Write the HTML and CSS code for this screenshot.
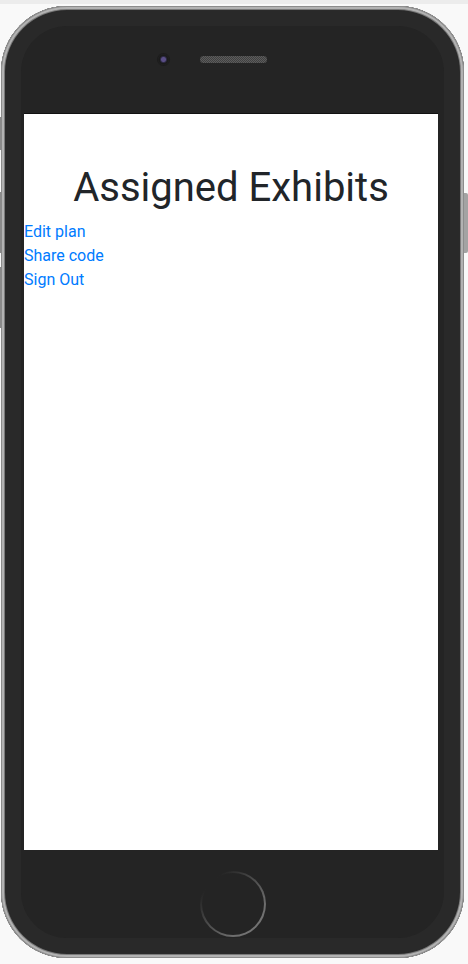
FILE: index.html
```html
<!DOCTYPE html>
<html>
<head>
<meta charset="utf-8">
<link rel="stylesheet" href="styles.css">
</head>
<body>
<div class="topbar"></div>
<div class="device">
  <div class="btn btn-mute"></div>
  <div class="btn btn-vol-up"></div>
  <div class="btn btn-vol-down"></div>
  <div class="btn btn-power"></div>
  <div class="frame">
    <div class="bezel-top">
      <div class="camera"></div>
      <div class="speaker"></div>
    </div>
    <div class="screen">
      <h1 class="title">Assigned Exhibits</h1>
      <nav class="links">
        <a href="#" class="link">Edit plan</a>
        <a href="#" class="link">Share code</a>
        <a href="#" class="link">Sign Out</a>
      </nav>
    </div>
    <div class="bezel-bottom">
      <div class="home"></div>
    </div>
  </div>
</div>
</body>
</html>
```

FILE: styles.css
```css
html, body {
  margin: 0;
  padding: 0;
}
body {
  background: #f9f9f9;
  width: 468px;
  height: 964px;
  overflow: hidden;
  font-family: Roboto, "Liberation Sans", sans-serif;
}
.topbar {
  height: 4px;
  background: #ececec;
}
.device {
  position: relative;
  margin: 2px 0 0 1px;
  width: 463px;
  height: 952px;
}
.frame {
  box-sizing: border-box;
  width: 463px;
  height: 952px;
  border-radius: 66px;
  background: #242424;
  box-shadow:
    inset 0 0 0 1px #8c8c8c,
    inset 0 0 0 3px #b2b2b2,
    inset 0 0 0 4px #7a7a7a,
    inset 0 0 0 5px #2a2a2a,
    inset 0 0 0 20px #292929;
  padding: 0 26px 0 23px;
  display: flex;
  flex-direction: column;
}
.bezel-top {
  height: 107px;
  display: flex;
  align-items: center;
  box-sizing: border-box;
  padding-left: 134px;
  gap: 31px;
}
.camera {
  width: 11px;
  height: 11px;
  border-radius: 50%;
  background: radial-gradient(circle at 50% 50%, #5a4e86 0 2px, #2f2b45 3px, #1a1a1a 4px, #202020 6px);
  box-shadow: 0 0 0 1px #1c1c1c;
}
.speaker {
  width: 67px;
  height: 7px;
  border-radius: 4px;
  background-color: #404040;
  background-image:
    linear-gradient(45deg, #5c5c5c 25%, transparent 25%, transparent 75%, #5c5c5c 75%),
    linear-gradient(45deg, #5c5c5c 25%, transparent 25%, transparent 75%, #5c5c5c 75%);
  background-size: 2px 2px;
  background-position: 0 0, 1px 1px;
}
.screen {
  width: 414px;
  height: 737px;
  background: #fff;
  box-sizing: border-box;
  padding-top: 51px;
  border-top: 1px solid #111;
}
.title {
  margin: -1px 0 8px;
  font-family: Roboto, "Liberation Sans", sans-serif;
  font-weight: 400;
  font-size: 40px;
  line-height: 1.2;
  color: #212529;
  text-align: center;
}
.links {
  display: flex;
  flex-direction: column;
  align-items: flex-start;
}
.link {
  font-size: 16px;
  line-height: 24px;
  color: #007bff;
  text-decoration: none;
}
.bezel-bottom {
  flex: 1;
  display: flex;
  justify-content: center;
  align-items: flex-start;
  padding-top: 21px;
  padding-left: 4px;
}
.home {
  width: 62px;
  height: 62px;
  border-radius: 50%;
  border: 2px solid transparent;
  background:
    linear-gradient(#242424, #242424) padding-box,
    linear-gradient(135deg, #242424 18%, #4a4a4a 45%, #6e6e6e 75%, #7a7a7a 100%) border-box;
}
.btn {
  position: absolute;
  background: #8a8a8a;
}
.btn-mute {
  left: -1px;
  top: 111px;
  width: 2px;
  height: 33px;
}
.btn-vol-up {
  left: -1px;
  top: 186px;
  width: 2px;
  height: 61px;
}
.btn-vol-down {
  left: -1px;
  top: 261px;
  width: 2px;
  height: 61px;
}
.btn-power {
  right: -4px;
  top: 187px;
  width: 4px;
  height: 60px;
  background: #a3a3a3;
  border-radius: 0 2px 2px 0;
}
```
